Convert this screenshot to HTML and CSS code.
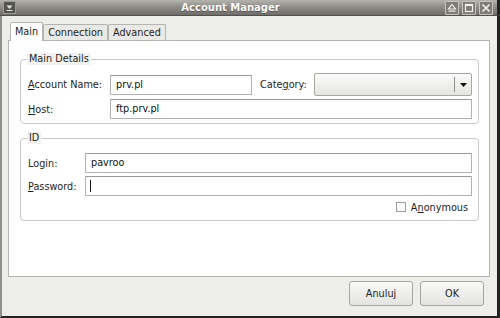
FILE: index.html
```html
<!DOCTYPE html>
<html lang="en">
<head>
  <meta charset="UTF-8" />
  <title>Account Manager</title>
  <link rel="stylesheet" href="styles.css">
</head>
<body>
  <div class="window">
    <div class="titlebar">
      <span class="tb-menu">
        <svg viewBox="0 0 11 11" width="11" height="11">
          <path d="M2.5 3.5h6l-3 3.5z" fill="#e8e8e4"/>
          <rect x="2.5" y="8" width="6" height="1" fill="#e8e8e4"/>
        </svg>
      </span>
      <span class="tb-title">Account Manager</span>
      <span class="tb-btn">
        <svg viewBox="0 0 12 12" width="12" height="12">
          <path d="M6 2.5l3.5 4.5h-7z" fill="none" stroke="#f0f0ec" stroke-width="1.2"/>
          <rect x="2.5" y="8.5" width="7" height="1.2" fill="#f0f0ec"/>
        </svg>
      </span>
      <span class="tb-btn">
        <svg viewBox="0 0 12 12" width="12" height="12">
          <rect x="2.5" y="2.5" width="7" height="7" fill="none" stroke="#f0f0ec" stroke-width="1.2"/>
          <rect x="2.5" y="2.5" width="7" height="1.5" fill="#f0f0ec"/>
        </svg>
      </span>
      <span class="tb-btn">
        <svg viewBox="0 0 12 12" width="12" height="12">
          <path d="M2.5 2.5l7 7M9.5 2.5l-7 7" stroke="#f0f0ec" stroke-width="1.6"/>
        </svg>
      </span>
    </div>

    <div class="frame">
      <div class="tabs">
        <div class="tab active">Main</div>
        <div class="tab">Connection</div>
        <div class="tab">Advanced</div>
      </div>

      <div class="panel">
        <fieldset class="group">
          <legend>Main Details</legend>
          <div class="details">
            <label><u>A</u>ccount Name:</label>
            <div class="entry">prv.pl</div>
            <label class="cat">Cate<u>g</u>ory:</label>
            <div class="combo">
              <span class="combo-sep"></span>
              <svg viewBox="0 0 7 4" width="7" height="4"><path d="M0 0h7l-3.5 4z" fill="#111"/></svg>
            </div>
            <label><u>H</u>ost:</label>
            <div class="entry span3">ftp.prv.pl</div>
          </div>
        </fieldset>

        <fieldset class="group">
          <legend>ID</legend>
          <div class="ident">
            <label>Login:</label>
            <div class="entry">pavroo</div>
            <label><u>P</u>assword:</label>
            <div class="entry"><span class="caret"></span></div>
          </div>
          <div class="check">
            <span class="box"></span>
            <span>A<u>n</u>onymous</span>
          </div>
        </fieldset>
      </div>

      <div class="actions">
        <button class="btn">Anuluj</button>
        <button class="btn">OK</button>
      </div>
    </div>
  </div>
</body>
</html>
```

FILE: styles.css
```css
body {
  margin: 0;
  font-family: "DejaVu Sans", sans-serif;
  font-size: 9.7px;
  color: #1e1e1e;
  background: #2a2a2a;
}

.window {
  width: 500px;
  height: 318px;
  display: flex;
  flex-direction: column;
  background: #edede9;
}

/* title bar */
.titlebar {
  height: 16px;
  box-sizing: border-box;
  display: flex;
  align-items: center;
  gap: 3px;
  padding: 0 4px 0 3px;
  background: linear-gradient(#b4b3ae, #8e8d88 45%, #6e6d69);
  border-bottom: 1px solid #50504c;
  border-right: 3px solid #222;
}

.tb-menu {
  width: 11px;
  height: 11px;
  display: flex;
  background: #55554f;
  border: 1px solid #9c9b96;
}

.tb-title {
  flex: 1;
  text-align: center;
  font-weight: bold;
  font-size: 10px;
  color: #fbfbf8;
  text-shadow: 0 1px 0 #55544f;
}

.tb-btn {
  width: 12px;
  height: 12px;
  display: flex;
  border: 1px solid #c5c4bf;
  border-radius: 1px;
  background: #7d7c77;
}

/* window body */
.frame {
  flex: 1;
  display: flex;
  flex-direction: column;
  border-left: 2px solid #8e8e8a;
  border-right: 3px solid #222;
  border-bottom: 2px solid #222;
}

.tabs {
  display: flex;
  align-items: flex-end;
  margin: 6px 0 0 8px;
  height: 18px;
}

.tab {
  height: 16px;
  line-height: 16px;
  padding: 0 4px;
  background: #e9e9e5;
  border: 1px solid #b4b4b0;
  border-bottom: none;
  border-radius: 2px 2px 0 0;
  box-sizing: border-box;
}

.tab.active {
  height: 19px;
  line-height: 18px;
  padding: 0 4px;
  margin-bottom: -1px;
  background: #fff;
  position: relative;
  z-index: 1;
}

.panel {
  height: 237px;
  box-sizing: border-box;
  margin: 0 7px 0 6px;
  background: #fff;
  border: 1px solid #b4b4b0;
  padding: 12px 10px 0 11px;
}

.group {
  margin: 0 0 8px;
  padding: 8px 6px 4px 7px;
  border: 1px solid #cacac6;
  border-radius: 4px;
}

.group + .group {
  padding-bottom: 7px;
}

.group legend {
  padding: 0 2px;
  margin-left: -1px;
  background: #f2f2ef;
  line-height: 12px;
}

label {
  white-space: nowrap;
}

u {
  text-underline-offset: 1px;
}

.details {
  display: grid;
  grid-template-columns: 82px 142px 62px 1fr;
  grid-template-rows: 23px 20px;
  row-gap: 3px;
  align-items: center;
}

.details .cat {
  padding-left: 8px;
}

.span3 {
  grid-column: 2 / 5;
}

.ident {
  display: grid;
  grid-template-columns: 57px 1fr;
  grid-template-rows: 20px 20px;
  row-gap: 3px;
  align-items: center;
  margin-top: 1px;
}

.entry {
  height: 20px;
  box-sizing: border-box;
  line-height: 18px;
  padding: 0 5px;
  background: #fff;
  border: 1px solid #b2b2ae;
  border-top-color: #9a9a96;
  border-radius: 1px;
  color: #111;
  display: flex;
  align-items: center;
}

.caret {
  width: 1px;
  height: 12px;
  background: #111;
  margin-left: -1px;
}

.combo {
  height: 23px;
  box-sizing: border-box;
  display: flex;
  align-items: center;
  justify-content: flex-end;
  gap: 5px;
  padding-right: 4px;
  background: linear-gradient(#fbfbfa, #e4e4e0);
  border: 1px solid #a6a6a2;
  border-radius: 2px;
}

.combo-sep {
  width: 1px;
  height: 15px;
  background: #8e8e8a;
}

.check {
  display: flex;
  justify-content: flex-end;
  align-items: center;
  gap: 5px;
  margin: 5px 4px 0 0;
  height: 12px;
}

.check .box {
  width: 8px;
  height: 8px;
  border: 1px solid #9e9e9a;
  background: #fafafa;
}

/* dialog buttons */
.actions {
  display: flex;
  justify-content: flex-end;
  gap: 7px;
  margin: 4px 13px 0 0;
}

.btn {
  width: 64px;
  height: 25px;
  font: inherit;
  color: #1e1e1e;
  background: linear-gradient(#f9f9f7, #e3e3df);
  border: 1px solid #a6a6a2;
  border-radius: 3px;
}
```
